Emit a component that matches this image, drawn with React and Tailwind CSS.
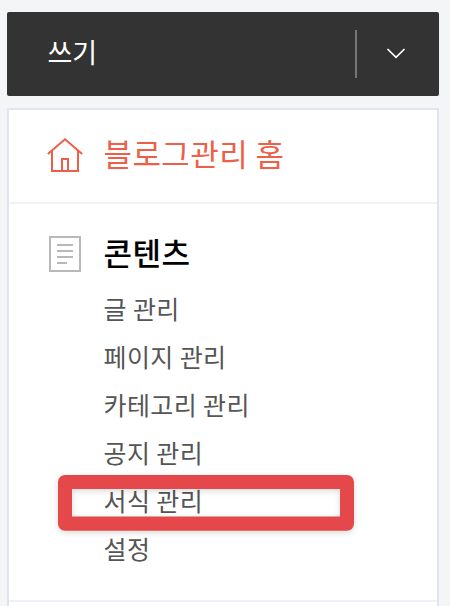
const contentLinks = ['글 관리', '페이지 관리', '카테고리 관리', '공지 관리', '서식 관리', '설정'];

function HomeIcon() {
  return (
    <svg width="38" height="36" viewBox="0 0 38 36" fill="none" stroke="#ee5f48" strokeWidth="2">
      <path d="M0.8 17 L18 2.3 L35.2 17" />
      <path d="M5 14 V34 H31 V14" />
      <path d="M15 34 V22 H21 V34" />
    </svg>
  );
}

function DocumentIcon() {
  return (
    <svg width="32" height="36" viewBox="0 0 32 36" fill="none" stroke="#b8b8b8" strokeWidth="2">
      <rect x="1" y="1" width="30" height="34" />
      <path d="M8 9 H24 M8 15 H24 M8 21 H24 M8 27 H18" />
    </svg>
  );
}

export default function App() {
  return (
    <div className="h-[606px] w-[450px] overflow-hidden bg-[#f3f5f7] pt-3 pl-[7px] font-['Noto_Sans_CJK_KR','Liberation_Sans',sans-serif]">
      {/* Write button */}
      <div className="flex h-[84px] w-[432px] items-center rounded-[2px] bg-[#333] pl-[40.5px]">
        <span className="flex-1 pb-1 text-[27px] leading-10 text-white">쓰기</span>
        <span className="h-12 w-[2px] bg-[#777]" />
        <button className="flex w-[82px] justify-center pr-1" aria-label="더보기">
          <svg width="20" height="12" viewBox="0 0 20 12" fill="none" stroke="#fff" strokeWidth="1.7">
            <path d="M1.5 1 L10 9.3 L18.5 1" />
          </svg>
        </button>
      </div>

      {/* Menu */}
      <div className="mt-3 h-[520px] w-[432px] border-2 border-[#e0e4ee] bg-white">
        <div className="flex h-[94px] items-center border-b-2 border-[#f0f1f8] pb-[2px] pl-[38px]">
          <HomeIcon />
          <span className="ml-[18.5px] pb-[5px] text-[31px] leading-10 tracking-[0.4px] text-[#ee5f48]">블로그관리 홈</span>
        </div>

        <div className="h-[398px] border-b-2 border-[#f0f1f8] pt-7 pl-10">
          <div className="flex h-11 items-center">
            <DocumentIcon />
            <span className="ml-[22.5px] pb-1 text-[31px] leading-10 font-medium tracking-[0.5px] text-black">콘텐츠</span>
          </div>
          <ul className="mt-[9px] ml-[54.5px] text-[25px] leading-[46px] tracking-[0.4px] text-[#555]">
            {contentLinks.map((label) => (
              <li key={label} className="relative h-12">
                {label}
                {label === '서식 관리' && (
                  <span className="absolute -top-[2px] -left-[45.5px] h-14 w-[296px] drop-shadow-[0_2px_3px_rgba(0,0,0,0.15)]">
                    <svg width="296" height="56" viewBox="0 0 296 56">
                      <path fill="#e5484b" fillRule="evenodd" d="M7 0 H289 A7 7 0 0 1 296 7 V48.7 A7 7 0 0 1 289 55.7 H7 A7 7 0 0 1 0 48.7 V7 A7 7 0 0 1 7 0 Z M14 14 V41.5 H282 V14 Z" />
                    </svg>
                  </span>
                )}
              </li>
            ))}
          </ul>
        </div>
      </div>
    </div>
  );
}
